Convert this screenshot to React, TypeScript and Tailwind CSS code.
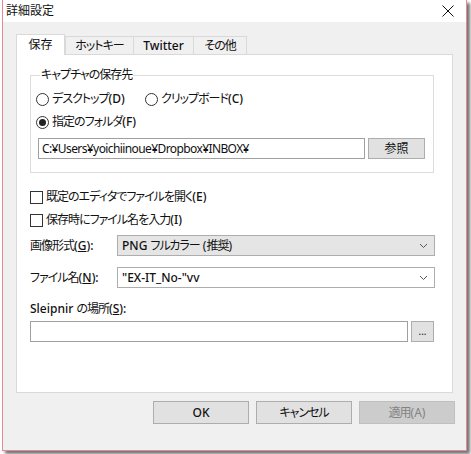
import React from "react";

const Radio = ({ checked }: { checked?: boolean }) => (
  <span className="w-[13px] h-[13px] rounded-full border border-[#333] bg-white flex items-center justify-center shrink-0">
    {checked && <span className="w-[7px] h-[7px] rounded-full bg-[#222]" />}
  </span>
);

const Check = () => (
  <span className="w-[13px] h-[13px] border border-[#333] bg-white shrink-0" />
);

const Chevron = () => (
  <svg width="9" height="6" viewBox="0 0 9 6" className="shrink-0">
    <path d="M1 1 L4.5 4.5 L8 1" fill="none" stroke="#555" strokeWidth="1" />
  </svg>
);

// latin run: Meiryo UI draws these a bit heavier than the kana
const L = ({ children }: { children: React.ReactNode }) => (
  <span className="font-medium tracking-normal">{children}</span>
);

const Tab = ({ label, className }: { label: React.ReactNode; className: string }) => (
  <div className={`flex items-center justify-center border border-b-0 border-[#d9d9d9] ${className}`}>
    {label}
  </div>
);

export default function App() {
  return (
    <div className="w-[471px] h-[454px] bg-white overflow-hidden text-[12px] leading-[16px] text-[#111] tracking-[-1px] font-['Noto_Sans','Noto_Sans_CJK_JP',sans-serif] [font-feature-settings:'palt']">
      <div className="ml-[2px] w-[465px] h-[451px] border-x border-b border-[#e28a96] flex flex-col shadow-[3px_3px_3px_rgba(0,0,0,0.55)]">
        {/* title bar */}
        <div className="h-[22px] bg-white flex items-center justify-between pl-[3px] pr-[12px] shrink-0">
          <span className="tracking-normal">詳細設定</span>
          <svg width="12" height="12" viewBox="0 0 12 12">
            <path d="M0.5 0.5 L11.5 11.5 M11.5 0.5 L0.5 11.5" stroke="#111" strokeWidth="1" />
          </svg>
        </div>

        <div className="flex-1 bg-[#f0f0f0] pt-[12px] pl-[13px]">
          {/* tabs */}
          <div className="flex items-end h-[20px]">
            <Tab label="保存" className="w-[49px] h-[21px] bg-white relative z-10 -mb-px tracking-normal" />
            <Tab label="ホットキー" className="w-[69px] h-[18px] bg-[#f0f0f0]" />
            <Tab label={<L>Twitter</L>} className="w-[61px] h-[18px] bg-[#f0f0f0] -ml-px" />
            <Tab label="その他" className="w-[54px] h-[18px] bg-[#f0f0f0] -ml-px" />
          </div>

          {/* panel */}
          <div className="w-[437px] h-[339px] bg-white border border-[#d9d9d9] pl-[13px] pt-[12px]">
            <fieldset className="w-[404px] border border-[#dcdcdc] pl-[5px] pb-[13px]">
              <legend className="ml-[4px] px-[1px]">キャプチャの保存先</legend>
              <div className="flex items-center h-[16px] mt-[8px]">
                <div className="w-[109px] flex items-center gap-[3px]">
                  <Radio />
                  <span>デスクトップ<L>(D)</L></span>
                </div>
                <div className="flex items-center gap-[3px]">
                  <Radio />
                  <span>クリップボード<L>(C)</L></span>
                </div>
              </div>
              <div className="flex items-center gap-[3px] h-[16px] mt-[7px]">
                <Radio checked />
                <span>指定のフォルダ<L>(F)</L></span>
              </div>
              <div className="flex items-center gap-[3px] mt-[8px] ml-[2px]">
                <div className="w-[327px] h-[21px] border border-[#a0a0a0] bg-white flex items-center pl-[3px] tracking-[-0.6px]">
                  C:¥Users¥yoichiinoue¥Dropbox¥INBOX¥
                </div>
                <button className="w-[57px] h-[21px] bg-[#e1e1e1] border border-[#adadad] flex items-center justify-center tracking-normal">
                  参照
                </button>
              </div>
            </fieldset>

            <div className="flex items-center gap-[3px] h-[16px] mt-[16px]">
              <Check />
              <span>既定のエディタでファイルを開く<L>(E)</L></span>
            </div>
            <div className="flex items-center gap-[3px] h-[16px] mt-[7px]">
              <Check />
              <span>保存時にファイル名を入力<L>(I)</L></span>
            </div>

            <div className="flex items-center mt-[7px]">
              <span className="w-[87px]">
                画像形式<L>(<span className="underline">G</span>):</L>
              </span>
              <div className="w-[318px] h-[21px] bg-[#e5e5e5] border border-[#adadad] flex items-center justify-between pl-[4px] pr-[6px]">
                <span>
                  <L>PNG </L>フルカラー<span className="tracking-normal"> (</span>推奨<span className="tracking-normal">)</span>
                </span>
                <Chevron />
              </div>
            </div>
            <div className="flex items-center mt-[11px]">
              <span className="w-[87px]">
                ファイル名<L>(<span className="underline">N</span>):</L>
              </span>
              <div className="w-[318px] h-[21px] bg-white border border-[#adadad] flex items-center justify-between pl-[4px] pr-[6px]">
                <L>"EX-IT_No-"vv</L>
                <Chevron />
              </div>
            </div>

            <div className="h-[16px] mt-[13px]">
              <L>Sleipnir </L>の場所
              <L>(<span className="underline">S</span>):</L>
            </div>
            <div className="flex items-center gap-[3px] mt-[4px]">
              <div className="w-[378px] h-[21px] border border-[#a0a0a0] bg-white" />
              <button className="w-[23px] h-[21px] bg-[#e1e1e1] border border-[#adadad] flex items-center justify-center text-[10px] leading-none pb-[2px] tracking-normal">
                ...
              </button>
            </div>
          </div>

          {/* buttons */}
          <div className="flex gap-[7px] mt-[8px] ml-[137px]">
            <button className="w-[96px] h-[23px] bg-[#e1e1e1] border border-[#adadad]">
              <L>OK</L>
            </button>
            <button className="w-[96px] h-[23px] bg-[#e1e1e1] border border-[#adadad]">キャンセル</button>
            <button className="w-[96px] h-[23px] bg-[#cccccc] border border-[#bfbfbf] text-[#838383]">
              適用<span className="tracking-normal">(A)</span>
            </button>
          </div>
        </div>
      </div>
    </div>
  );
}
